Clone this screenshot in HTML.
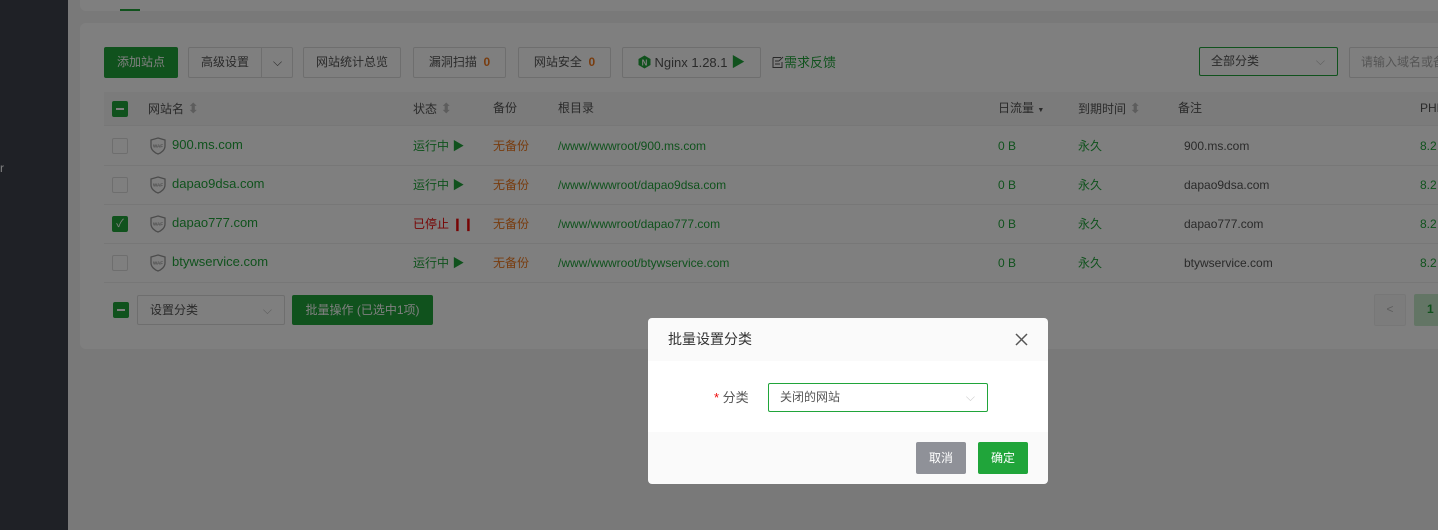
<!DOCTYPE html>
<html><head><meta charset="utf-8"><style>
*{box-sizing:border-box;margin:0;padding:0}
body{width:1438px;height:530px;overflow:hidden;background:#f3f3f3;font-family:"Liberation Sans","Noto Sans CJK SC",sans-serif;font-size:12px;color:#555;position:relative;line-height:16px}
.a{position:absolute}
.side{left:0;top:0;width:68px;height:530px;background:#3e434d}
.card{background:#fff;border-radius:6px}
.btn{position:absolute;height:31px;border:1px solid #ddd;border-radius:2px;background:#fff;line-height:29px;text-align:center;color:#555;font-size:12px}
.g{color:#20a53a}.o{color:#f0791e}.r{color:#ef0808}
.cb{position:absolute;width:16px;height:16px;border:1px solid #ddd;border-radius:2px;background:#fff}
.cbg{background:#20a53a;border-color:#20a53a}
.row{position:absolute;left:104px;right:0;height:39px;border-bottom:1px solid #eee;font-size:12px}
.row span{position:absolute;top:11px;white-space:nowrap;line-height:16px}
.row svg{position:absolute;left:46px;top:10px}
.hd{position:absolute;top:100px;line-height:16px}
.ov{position:absolute;left:0;top:0;width:1438px;height:530px;background:rgba(0,0,0,.5)}
</style></head><body>
<div class="a side"><div class="a" style="left:0;top:160px;color:#fff;font-size:12px">r</div></div>
<div class="a card" style="left:80px;top:-10px;width:1370px;height:21px"></div>
<div class="a" style="left:120px;top:9px;width:20px;height:2px;background:#20a53a"></div>
<div class="a card" style="left:80px;top:23px;width:1370px;height:326px"></div>
<div class="btn" style="left:104px;top:47px;width:74px;background:#20a53a;border-color:#20a53a;color:#fff">添加站点</div>
<div class="btn" style="left:188px;top:47px;width:105px;text-align:left;padding-left:12px">高级设置<span class="a" style="left:72px;top:0;height:29px;border-left:1px solid #ddd;width:32px;text-align:center">⌵</span></div>
<div class="btn" style="left:303px;top:47px;width:98px">网站统计总览</div>
<div class="btn" style="left:413px;top:47px;width:93px">漏洞扫描 &nbsp;<b class="o">0</b></div>
<div class="btn" style="left:518px;top:47px;width:93px">网站安全 &nbsp;<b class="o">0</b></div>
<div class="btn" style="left:622px;top:47px;width:139px;font-size:13px"><svg width="13" height="14" viewBox="0 0 13 14" style="vertical-align:-2px"><path d="M6.5 0.5L12.5 4V10L6.5 13.5L0.5 10V4Z" fill="#20a53a"/><text x="6.5" y="10.5" font-size="8" font-weight="bold" fill="#fff" text-anchor="middle" font-family="Liberation Sans">N</text></svg> Nginx 1.28.1 <span class="g" style="font-size:14px">▶</span></div>
<div class="a" style="left:772px;top:55px;color:#555;font-size:13px"><svg width="12" height="13" viewBox="0 0 12 13" style="vertical-align:-2px"><path d="M1 1.5h8M1 1.5v10h9V6M3 5h4M3 8h5" stroke="#555" fill="none"/><path d="M11 1L7 5" stroke="#555"/></svg><span class="g">需求反馈</span></div>
<div class="btn" style="left:1199px;top:47px;width:139px;height:29px;border-color:#20a53a;text-align:left;padding-left:11px;line-height:27px">全部分类<span class="a" style="right:12px;color:#bbb">⌵</span></div>
<div class="btn" style="left:1349px;top:47px;width:120px;text-align:left;padding-left:11px;color:#aaa">请输入域名或备</div>
<div class="a" style="left:104px;top:92px;right:0;height:34px;background:#f6f6f6;border-bottom:1px solid #eee"></div>
<div class="cb cbg" style="left:112px;top:101px"><div class="a" style="left:3px;top:6px;width:8px;height:2px;background:#fff"></div></div>
<div class="hd" style="left:148px">网站名 <span style="color:#bbb;font-size:14px">⬍</span></div>
<div class="hd" style="left:413px">状态 <span style="color:#bbb;font-size:14px">⬍</span></div>
<div class="hd" style="left:493px">备份</div>
<div class="hd" style="left:558px">根目录</div>
<div class="hd" style="left:998px">日流量 <span style="font-size:7px">▼</span></div>
<div class="hd" style="left:1078px">到期时间 <span style="color:#bbb;font-size:14px">⬍</span></div>
<div class="hd" style="left:1178px">备注</div>
<div class="hd" style="left:1420px">PHP</div>

<div class="row" style="top:127px"><span style="left:8px;top:11px" class="cb"></span><svg width="16" height="18" viewBox="0 0 16 18"><path d="M8 1L15 3V9C15 13 11 16 8 17C5 16 1 13 1 9V3Z" fill="#fff" stroke="#999" stroke-width="1.3"/><text x="8" y="10.5" font-size="4.5" font-weight="bold" fill="#999" text-anchor="middle" font-family="Liberation Sans">WAF</text></svg><span class="g" style="left:68px;top:10px;font-size:13px">900.ms.com</span><span class="g" style="left:309px">运行中 ▶</span><span class="o" style="left:389px">无备份</span><span class="g" style="left:454px">/www/wwwroot/900.ms.com</span><span class="g" style="left:894px">0 B</span><span class="g" style="left:974px">永久</span><span style="left:1080px">900.ms.com</span><span class="g" style="left:1316px">8.2</span></div>
<div class="row" style="top:166px"><span style="left:8px;top:11px" class="cb"></span><svg width="16" height="18" viewBox="0 0 16 18"><path d="M8 1L15 3V9C15 13 11 16 8 17C5 16 1 13 1 9V3Z" fill="#fff" stroke="#999" stroke-width="1.3"/><text x="8" y="10.5" font-size="4.5" font-weight="bold" fill="#999" text-anchor="middle" font-family="Liberation Sans">WAF</text></svg><span class="g" style="left:68px;top:10px;font-size:13px">dapao9dsa.com</span><span class="g" style="left:309px">运行中 ▶</span><span class="o" style="left:389px">无备份</span><span class="g" style="left:454px">/www/wwwroot/dapao9dsa.com</span><span class="g" style="left:894px">0 B</span><span class="g" style="left:974px">永久</span><span style="left:1080px">dapao9dsa.com</span><span class="g" style="left:1316px">8.2</span></div>
<div class="row" style="top:205px"><span style="left:8px;top:11px;color:#fff;font-size:11px;text-align:center;line-height:14px" class="cb cbg">✓</span><svg width="16" height="18" viewBox="0 0 16 18"><path d="M8 1L15 3V9C15 13 11 16 8 17C5 16 1 13 1 9V3Z" fill="#fff" stroke="#999" stroke-width="1.3"/><text x="8" y="10.5" font-size="4.5" font-weight="bold" fill="#999" text-anchor="middle" font-family="Liberation Sans">WAF</text></svg><span class="g" style="left:68px;top:10px;font-size:13px">dapao777.com</span><span class="r" style="left:309px">已停止 <b style="letter-spacing:1px">❙❙</b></span><span class="o" style="left:389px">无备份</span><span class="g" style="left:454px">/www/wwwroot/dapao777.com</span><span class="g" style="left:894px">0 B</span><span class="g" style="left:974px">永久</span><span style="left:1080px">dapao777.com</span><span class="g" style="left:1316px">8.2</span></div>
<div class="row" style="top:244px"><span style="left:8px;top:11px" class="cb"></span><svg width="16" height="18" viewBox="0 0 16 18"><path d="M8 1L15 3V9C15 13 11 16 8 17C5 16 1 13 1 9V3Z" fill="#fff" stroke="#999" stroke-width="1.3"/><text x="8" y="10.5" font-size="4.5" font-weight="bold" fill="#999" text-anchor="middle" font-family="Liberation Sans">WAF</text></svg><span class="g" style="left:68px;top:10px;font-size:13px">btywservice.com</span><span class="g" style="left:309px">运行中 ▶</span><span class="o" style="left:389px">无备份</span><span class="g" style="left:454px">/www/wwwroot/btywservice.com</span><span class="g" style="left:894px">0 B</span><span class="g" style="left:974px">永久</span><span style="left:1080px">btywservice.com</span><span class="g" style="left:1316px">8.2</span></div>

<div class="cb cbg" style="left:113px;top:302px"><div class="a" style="left:3px;top:6px;width:8px;height:2px;background:#fff"></div></div>
<div class="btn" style="left:137px;top:295px;width:148px;height:30px;text-align:left;padding-left:12px;line-height:28px">设置分类<span class="a" style="right:12px;color:#bbb">⌵</span></div>
<div class="btn" style="left:292px;top:295px;width:141px;height:30px;line-height:28px;background:#20a53a;border-color:#20a53a;color:#fff">批量操作 (已选中1项)</div>
<div class="btn" style="left:1374px;top:294px;width:32px;height:32px;background:#f9f9f9;border-color:#eee;color:#bbb">&lt;</div>
<div class="btn" style="left:1414px;top:294px;width:40px;height:32px;background:#c6ebcb;border-color:#c6ebcb;color:#20a53a;font-weight:bold;text-align:left;padding-left:12px">1</div>

<div class="ov"></div>

<div class="a" style="left:648px;top:318px;width:400px;height:166px;border-radius:4px;background:#fafafa;overflow:hidden">
 <div class="a" style="left:20px;top:13px;font-size:14px;color:#333">批量设置分类</div>
 <svg class="a" style="left:367px;top:15px" width="13" height="13" viewBox="0 0 13 13"><path d="M1 1L12 12M12 1L1 12" stroke="#555" stroke-width="1.5"/></svg>
 <div class="a" style="left:0;top:43px;width:400px;height:71px;background:#fff"></div>
 <div class="a" style="left:66px;top:72px;font-size:13px;color:#555"><span style="color:#ef0808">*</span> 分类</div>
 <div class="a" style="left:120px;top:65px;width:220px;height:29px;border:1px solid #20a53a;border-radius:2px;background:#fff;padding-left:11px;line-height:27px;color:#555;font-size:12px">关闭的网站<span class="a" style="right:12px;color:#ccc">⌵</span></div>
 <div class="a" style="left:268px;top:124px;width:50px;height:32px;background:#8f9198;border-radius:2px;color:#fff;text-align:center;line-height:32px">取消</div>
 <div class="a" style="left:330px;top:124px;width:50px;height:32px;background:#20a53a;border-radius:2px;color:#fff;text-align:center;line-height:32px">确定</div>
</div>
</body></html>
